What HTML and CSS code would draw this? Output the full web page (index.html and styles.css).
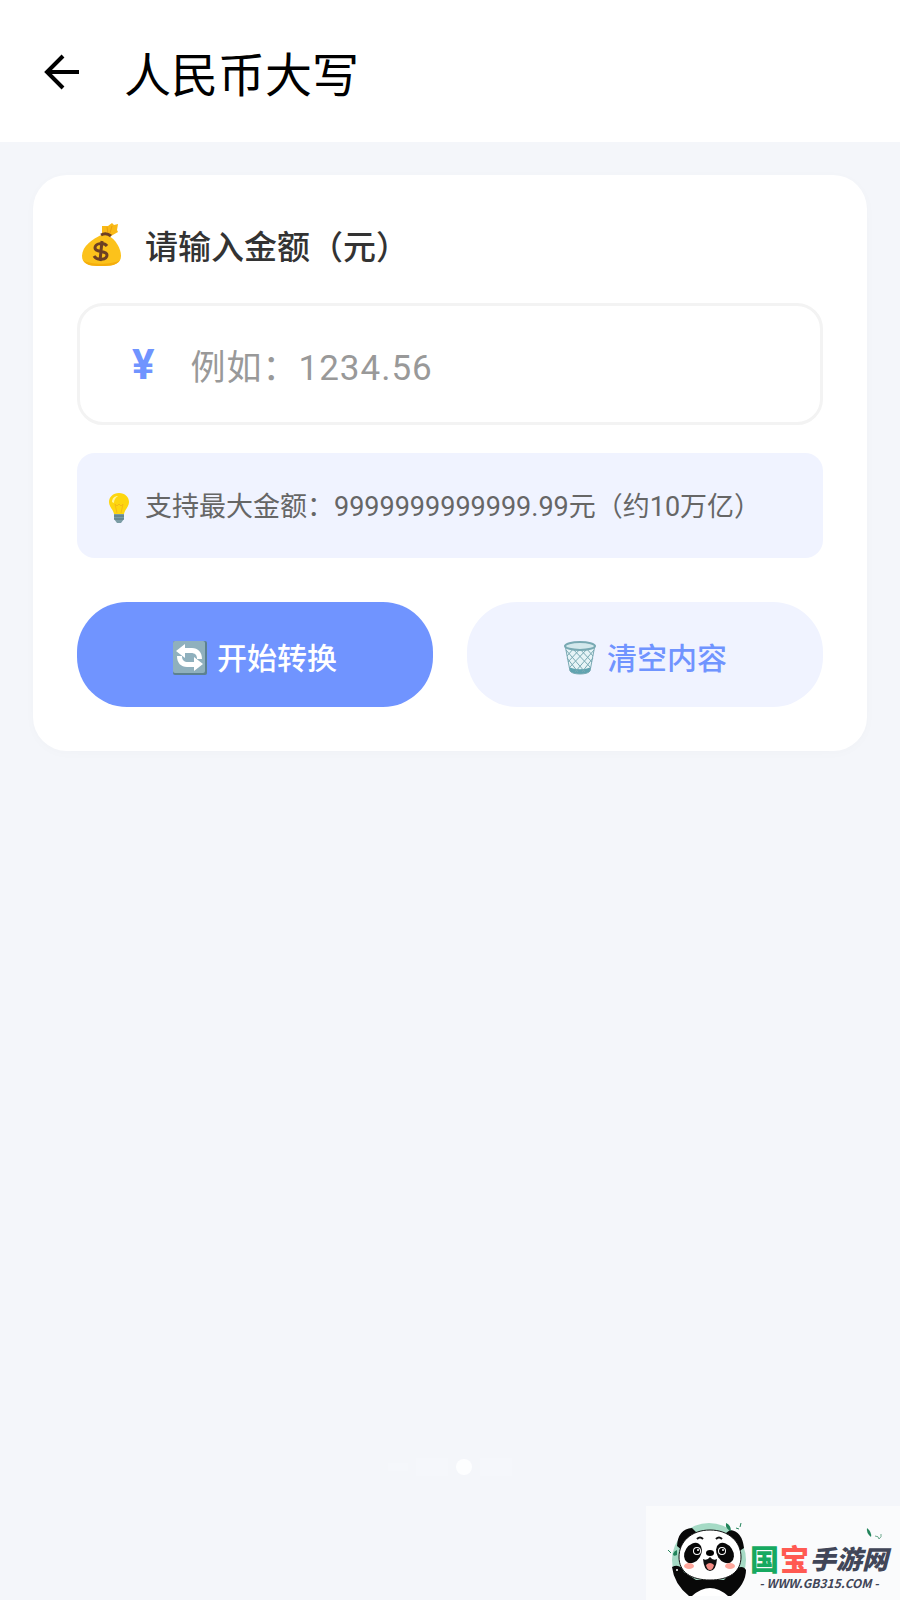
FILE: index.html
```html
<!DOCTYPE html>
<html lang="zh-CN">
<head>
    <meta charset="UTF-8">
    <meta name="viewport" content="width=device-width, initial-scale=1">
    <title>人民币大写</title>
    <link rel="stylesheet" href="styles.css">
</head>
<body>
    <header class="topbar">
        <button type="button" class="back" aria-label="返回">
            <svg viewBox="0 0 36 36" fill="none" stroke="#000" stroke-width="4">
                <path d="M35 18H3M19 2L3 18l16 16"/>
            </svg>
        </button>
        <h1>人民币大写</h1>
    </header>

    <main>
        <form class="card" id="convertForm">
            <label class="field-label" for="amount">
                <svg class="icon-bag" viewBox="0 0 40 44">
                    <path d="M21 3l6 0 4-3 2 2 4-1-1 6 1 2-7 4-9 0z" fill="#f9b916"/>
                    <path d="M26 4l1 7M31 3l-2 7" stroke="#e9a010" fill="none"/>
                    <path d="M20 12C12 16 1 23 1 33c0 7 5 10 19 10s20-3 20-10c0-8-6-17-12-20z" fill="#fcc21b"/>
                    <path d="M2 37c6 5 30 5 37 0-3 5-8 6-19 6S5 42 2 37z" fill="#f5ae0c"/>
                    <path d="M20 12q5-3 10 1" stroke="#6d4024" stroke-width="3" fill="none"/>
                    <path d="M26 23c-3-4-12-3-12 2 0 5 12 2 12 7 0 5-10 6-13 1M21 18l-2 20" stroke="#6d4024" stroke-width="3" fill="none"/>
                </svg>
                <span>请输入金额（元）</span>
            </label>

            <div class="amount-box">
                <span class="currency">¥</span>
                <input type="text" id="amount" name="amount" inputmode="decimal" placeholder="例如：1234.56">
            </div>

            <p class="tip">
                <svg class="icon-bulb" viewBox="0 0 20 30">
                    <path d="M10 0C4 0 0 4 0 9c0 5 4 7 5 12h10c1-5 5-7 5-12 0-5-4-9-10-9z" fill="#fdd60f"/>
                    <path d="M3 9c0-4 3-6 6-6-3 2-4 4-4 7z" fill="#fff59d"/>
                    <path d="M8 20L6 11l2 2 2-2 2 2 2-2-2 9" stroke="#f5b916" fill="none"/>
                    <path d="M5 21h10v5l-3 4H8l-3-4z" fill="#7b9ca5"/>
                    <path d="M5 23h10M5 26h10" stroke="#52747d"/>
                </svg>
                <span>支持最大金额：9999999999999.99元（约10万亿）</span>
            </p>

            <div class="actions">
                <button type="submit" class="btn btn-primary">
                    <svg class="icon-btn" viewBox="0 0 34 34">
                        <rect width="34" height="34" rx="2" fill="#5c8190"/>
                        <rect width="32" height="32" rx="2" fill="#8fb0bd"/>
                        <path d="M3 10l9-7v4h7c6 0 10 4 10 11h-5c0-4-2-6-6-6h-6v5z" fill="#fff"/>
                        <path d="M30 23l-9 7v-4h-7c-6 0-10-4-10-11h5c0 4 2 6 6 6h6v-5z" fill="#fff"/>
                    </svg>
                    <span>开始转换</span>
                </button>
                <button type="reset" class="btn btn-light">
                    <svg class="icon-btn" viewBox="0 0 34 34">
                        <path d="M2 4l5 26c2 4 18 4 20 0l5-26z" fill="#e6f3f6"/>
                        <path d="M6 26c6 3 16 3 22 0l-1 4c-2 4-18 4-20 0z" fill="#5fa3b0"/>
                        <path d="M3 9l19 22M4 17l11 14M9 7l19 20M16 7l13 14M23 7l7 8M31 9L12 31M30 17L19 31M25 7L6 27M18 7L5 21M11 7l-7 8" stroke="#79a9b3" fill="none"/>
                        <path d="M2 4l5 26c2 4 18 4 20 0l5-26" stroke="#79a9b3" fill="none"/>
                        <ellipse cx="17" cy="5" rx="15" ry="4" fill="#d3e8ec" stroke="#79a9b3" stroke-width="2"/>
                    </svg>
                    <span>清空内容</span>
                </button>
            </div>
        </form>
    </main>

    <div class="pager"><i class="dash"></i><i class="bar"></i><i class="dot"></i><i class="bar"></i></div>

    <a class="site-mark" href="#">
        <svg class="panda" viewBox="0 0 78 74">
            <circle cx="41" cy="38" r="37" fill="#a5dac5"/>
            <path d="M4 45q8-4 12 5l12 8h28l9-10q10-6 13 0 0 14-15 26H21Q6 62 4 45z" fill="#080808"/>
            <path d="M24 74q18-16 36 0z" fill="#fff"/>
            <path d="M9 24Q10 7 24 6l6 6-15 17zM76 26Q74 9 62 8l-8 6 16 16z" fill="#080808"/>
            <path d="M42 8c19 0 31 12 31 27 0 15-12 23-31 23S11 50 11 35 23 8 42 8z" fill="#fff" stroke="#111"/>
            <ellipse cx="25" cy="31" rx="8" ry="11" transform="rotate(32 25 31)" fill="#080808"/>
            <ellipse cx="57" cy="31" rx="8" ry="11" transform="rotate(-32 57 31)" fill="#080808"/>
            <circle cx="29" cy="29" r="4" fill="#fff"/><circle cx="29" cy="29" r="3"/><circle cx="30" cy="28" r="1" fill="#fff"/>
            <circle cx="54" cy="29" r="4" fill="#fff"/><circle cx="54" cy="29" r="3"/><circle cx="55" cy="28" r="1" fill="#fff"/>
            <path d="M29 17q3-3 6 0M48 17q3-3 6 0" stroke="#111" stroke-width="2" fill="none"/>
            <ellipse cx="42" cy="31" rx="4" ry="3"/>
            <path d="M35 37q4 2 7-2 3 4 7 2-1 12-7 12t-7-12z" fill="#111"/>
            <path d="M38 43q4-4 8 0-1 5-4 5t-4-5z" fill="#f58c85"/>
            <ellipse cx="21" cy="44" rx="5" ry="3" fill="#ffa79c"/>
            <ellipse cx="62" cy="44" rx="5" ry="3" fill="#ffa79c"/>
            <circle cx="9" cy="48" r="1" fill="#fff"/><circle cx="65" cy="49" r="1" fill="#fff"/>
            <path d="M9 33q-4 2-4-1 1-3 4-4zM58 1q5 2 5 8-6-2-5-8z" fill="#22845b"/>
            <path d="M0 28l3 3M68 6l3 1M73 1l-1 4" stroke="#22845b" fill="none"/>
        </svg>
        <span class="mark-text">
            <span class="mark-name"><b class="green">国</b><b class="red">宝</b><b>手游网</b></span>
            <span class="mark-url">- WWW.GB315.COM -</span>
        </span>
        <svg class="leaves" viewBox="0 0 16 12">
            <path d="M1 0q5 4 4 9-5-4-4-9z" fill="#22845b"/>
            <path d="M9 8q4 0 4 3 3-2 2-5" stroke="#6ca98d" fill="none"/>
        </svg>
    </a>
</body>
</html>
```
FILE: styles.css
```css
* {
    box-sizing: border-box;
}

body {
    display: flex;
    flex-direction: column;
    min-height: 100vh;
    margin: 0;
    background: #f4f6fa;
    color: #333;
    font-family: Roboto, "Noto Sans CJK SC", sans-serif;
}

button {
    border: 0;
    padding: 0;
    font-family: inherit;
    cursor: pointer;
}

.topbar {
    display: flex;
    align-items: center;
    gap: 44px;
    padding: 32px 44px 30px;
    background: #fff;
}

.back {
    width: 36px;
    height: 36px;
    background: none;
}

.back svg {
    display: block;
}

h1 {
    margin: 0;
    padding-top: 8px;
    color: #000;
    font-size: 47px;
    font-weight: 400;
    line-height: 72px;
}

main {
    flex: 1;
    padding: 33px;
}

.card {
    padding: 44px;
    border-radius: 34px;
    background: #fff;
    box-shadow: 0 2px 12px rgba(0, 0, 0, 0.02);
}

.field-label {
    display: flex;
    align-items: center;
    gap: 24px;
    margin-bottom: 32px;
    padding-left: 4px;
    font-size: 33px;
    font-weight: 500;
    line-height: 46px;
}

.field-label span {
    padding-top: 6px;
}

.icon-bag {
    width: 40px;
    height: 44px;
}

.amount-box {
    display: flex;
    align-items: center;
    height: 122px;
    margin-bottom: 28px;
    padding: 0 52px;
    border: 3px solid #f3f3f3;
    border-radius: 26px;
}

.currency {
    margin-right: 36px;
    color: #7094ff;
    font-size: 42px;
    font-weight: 700;
}

.amount-box input {
    flex: 1;
    min-width: 0;
    padding: 10px 0 0;
    border: 0;
    outline: 0;
    background: none;
    color: #333;
    font-family: inherit;
    font-size: 35px;
    letter-spacing: 1px;
    line-height: 52px;
}

.amount-box input::placeholder {
    color: #999;
}

.tip {
    display: flex;
    align-items: center;
    gap: 16px;
    margin: 0 0 44px;
    padding: 34px 32px 30px;
    border-radius: 18px;
    background: #f0f3ff;
    color: #666;
    font-size: 27px;
    line-height: 41px;
}

.icon-bulb {
    width: 20px;
    height: 30px;
}

.actions {
    display: flex;
    gap: 34px;
}

.btn {
    display: flex;
    flex: 1;
    align-items: center;
    justify-content: center;
    gap: 10px;
    height: 105px;
    padding-top: 7px;
    border-radius: 50px;
    font-size: 30px;
    font-weight: 500;
}

.btn span {
    padding-bottom: 4px;
}

.btn-primary {
    background: #7094ff;
    color: #fff;
}

.btn-light {
    background: #f0f3ff;
    color: #7094ff;
}

.icon-btn {
    width: 34px;
    height: 34px;
}

.pager {
    display: flex;
    align-items: center;
    justify-content: center;
    gap: 8px;
    padding-bottom: 124px;
}

.pager .dash,
.pager .bar {
    width: 20px;
    height: 8px;
    background: #f5f7fb;
}

.pager .bar {
    width: 32px;
    height: 18px;
}

.pager .dot {
    width: 16px;
    height: 16px;
    border-radius: 50%;
    background: #fdfeff;
}

/* site badge in the corner */
.site-mark {
    position: fixed;
    right: 0;
    bottom: 0;
    display: flex;
    align-items: flex-end;
    gap: 4px;
    padding: 16px 12px 4px 22px;
    background: #fafbfc;
    color: #414658;
    text-decoration: none;
}

.panda {
    width: 78px;
    height: 74px;
}

.mark-text {
    display: flex;
    flex-direction: column;
    align-items: center;
    padding-bottom: 6px;
}

.mark-name {
    display: flex;
    align-items: center;
    gap: 1px;
    font-family: "Noto Sans CJK SC", sans-serif;
    font-size: 26px;
    font-style: italic;
    line-height: 36px;
}

.mark-name b {
    font-weight: 900;
}

.mark-name .green,
.mark-name .red {
    font-size: 29px;
    font-style: normal;
}

.mark-name .green {
    color: #16a960;
}

.mark-name .red {
    color: #ff5a52;
}

.mark-url {
    font-family: "Noto Sans CJK SC", sans-serif;
    font-size: 12px;
    font-style: italic;
    font-weight: 700;
    line-height: 14px;
}

.leaves {
    position: absolute;
    top: 22px;
    right: 18px;
    width: 16px;
    height: 12px;
}
```
